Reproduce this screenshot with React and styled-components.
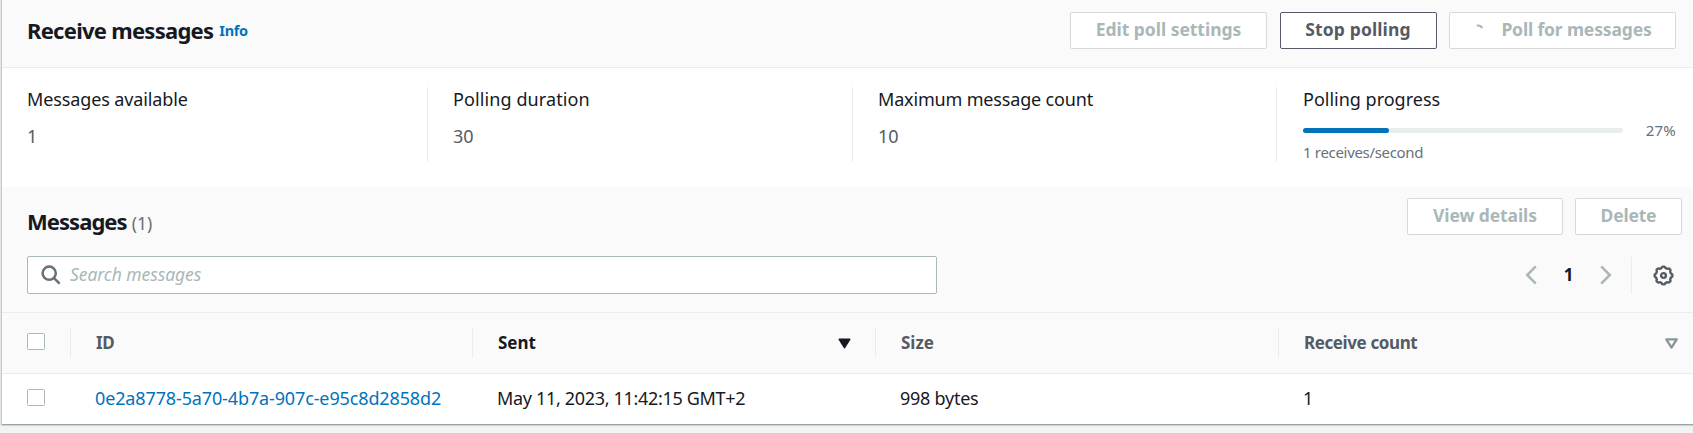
import React from 'react';
import styled, { createGlobalStyle } from 'styled-components';

const GlobalStyle = createGlobalStyle`
  * { box-sizing: border-box; }
  html, body { margin: 0; background: #f2f3f3; overflow: hidden; }
  body { font-family: 'Noto Sans', 'Open Sans', sans-serif; font-size: 18px; line-height: 28px; color: #16191f; }
`;

const Page = styled.div`
  height: 433px;
  padding-left: 2px;
  overflow: hidden;
`;

const Panel = styled.main`
  height: 424px;
  background: #fff;
  box-shadow: 0 1px 0 0 #98a3a4, 0 2px 1px 0 #d0d6d6, 0 0 0 1px #c0c9c9, 0 0 0 2px #e2e6e6;
`;

const Text = styled.span`
  white-space: nowrap;
  letter-spacing: ${(p) => p.$track || 0}px;
`;

const PollHeader = styled.header`
  display: flex;
  justify-content: space-between;
  height: 68px;
  padding: 12px 17px 0 25px;
  background: #fafafa;
  border-bottom: 1px solid #eaeded;
`;

const Title = styled.h2`
  display: flex;
  align-items: baseline;
  margin: 0;
  padding-top: ${(p) => p.$top}px;
  font-size: 22px;
  line-height: 30px;
  font-weight: 700;
`;

const InfoLink = styled.a`
  margin-left: 6px;
  font-size: 14.5px;
  font-weight: 700;
  color: #0073bb;
  position: relative;
  top: -3px;
`;

const Counter = styled.span`
  margin-left: 5px;
  font-size: 17.5px;
  font-weight: 400;
  color: #687078;
`;

const Actions = styled.div`
  display: flex;
  gap: ${(p) => p.$gap || 12}px;
`;

const Button = styled.button`
  display: flex;
  align-items: center;
  justify-content: center;
  width: ${(p) => p.$width}px;
  height: 37px;
  padding: 0 0 4px;
  border: 1px solid ${(p) => (p.disabled ? '#d5dbdb' : '#545b64')};
  border-radius: 2px;
  background: #fff;
  color: ${(p) => (p.disabled ? '#aab7b8' : '#545b64')};
  font: 700 17.5px/28px 'Noto Sans', sans-serif;
`;

const Spinner = styled.svg`
  width: 20px;
  height: 20px;
  margin-right: 8px;
`;

const Stats = styled.section`
  display: grid;
  grid-template-columns: 425px 425px 424px 1fr;
  height: 119px;
  padding-top: 19px;
`;

const Stat = styled.div`
  height: 75px;
  padding: 0 17px 0 ${(p) => (p.$last ? 26 : 25)}px;
  border-left: ${(p) => (p.$first ? 'none' : '1px solid #eaeded')};
`;

const StatLabel = styled.div`
  height: 27px;
  line-height: 24px;
`;

const StatValue = styled.div`
  padding-top: 8px;
  color: #545b64;
`;

const ProgressRow = styled.div`
  display: flex;
  align-items: center;
  justify-content: space-between;
  height: 20px;
  margin-top: 6px;
  font-size: 15px;
  color: #687078;
`;

const Track = styled.div`
  width: 320px;
  height: 5px;
  border-radius: 3px;
  background: #eaeded;
  margin-top: 1px;
`;

const Fill = styled.div`
  height: 5px;
  border-radius: 3px;
  background: #0073bb;
`;

const ProgressNote = styled.div`
  line-height: 22px;
  padding-top: 1px;
  font-size: 15px;
  color: #687078;
`;

const TableTools = styled.section`
  height: 126px;
  background: #fafafa;
  border-bottom: 1px solid #eaeded;
  padding: 11px 11px 0 25px;
`;

const ToolsRow = styled.div`
  display: flex;
  justify-content: space-between;
  height: 37px;
`;

const FilterRow = styled(ToolsRow)`
  margin-top: 21px;
  height: 38px;
`;

const Search = styled.label`
  display: flex;
  align-items: center;
  width: 910px;
  height: 38px;
  padding-left: 13px;
  border: 1px solid #aab7b8;
  border-radius: 2px;
  background: #fff;
`;

const SearchInput = styled.input`
  flex: 1;
  margin-left: 9px;
  padding: 0 0 2px;
  border: 0;
  outline: 0;
  background: transparent;
  font: italic 400 17.5px/28px 'Noto Sans', sans-serif;
  letter-spacing: -0.07px;
  &::placeholder { color: #aab7b8; opacity: 1; }
`;

const Pagination = styled.nav`
  display: flex;
  align-items: center;
  height: 38px;
`;

const PageNumber = styled.span`
  width: 63px;
  padding-bottom: 1px;
  text-align: center;
  font-weight: 700;
  font-size: 17px;
`;

const Preferences = styled.div`
  display: flex;
  align-items: center;
  height: 37px;
  margin-left: 19px;
  padding: 0 8px 0 21px;
  border-left: 1px solid #eaeded;
`;

const Row = styled.div`
  display: grid;
  grid-template-columns: 68px 402px 403px 403px 1fr;
  align-items: center;
  height: ${(p) => (p.$head ? 61 : 50)}px;
  background: ${(p) => (p.$head ? '#fafafa' : '#fff')};
  border-bottom: ${(p) => (p.$head ? '1px solid #eaeded' : 'none')};
`;

const HeadCell = styled.div`
  display: flex;
  align-items: center;
  justify-content: space-between;
  height: 30px;
  padding: 0 ${(p) => p.$end || 15}px 0 25px;
  border-left: 1px solid #eaeded;
  font-size: 17px;
  font-weight: 700;
  color: ${(p) => (p.$sorted ? '#16191f' : '#545b64')};
`;

const Cell = styled.div`
  padding: 0 0 2px 25px;
`;

const IdLink = styled.a`
  color: #0073bb;
`;

const Checkbox = styled.span`
  display: block;
  width: 18px;
  height: 17px;
  margin: 0 0 ${(p) => p.$lift}px 25px;
  border: 1px solid #aab7b8;
  border-radius: 1.5px;
  background: #fff;
`;

const SearchIcon = () => (
  <svg width="20" height="20" viewBox="0 0 20 20" fill="none" stroke="#687078" strokeWidth="2.5">
    <circle cx="8.2" cy="8.2" r="6.6" />
    <path d="M12.8 12.8L18.6 18.6" />
  </svg>
);

const Chevron = ({ next }) => (
  <svg width="12" height="20" viewBox="0 0 12 20" fill="none" stroke="#aab7b8" strokeWidth="2.5">
    <path d={next ? 'M1.2 1.4L9.8 10L1.2 18.6' : 'M10.8 1.4L2.2 10L10.8 18.6'} />
  </svg>
);

const gearPath = Array.from({ length: 96 }, (_, i) => {
  const a = (i / 96) * Math.PI * 2;
  const r = 8.25 + 0.65 * Math.tanh(2.2 * Math.cos(8 * a));
  return `${i ? 'L' : 'M'}${(10.5 + r * Math.cos(a)).toFixed(2)} ${(10.5 + r * Math.sin(a)).toFixed(2)}`;
}).join('') + 'Z';

const GearIcon = () => (
  <svg width="21" height="21" viewBox="0 0 21 21" fill="none" stroke="#545b64" strokeWidth="2.4" strokeLinejoin="round">
    <path d={gearPath} />
    <circle cx="10.5" cy="10.5" r="2.4" />
  </svg>
);

const SortIcon = ({ active }) => (
  <svg width="13" height="11" viewBox="0 0 13 11" strokeLinejoin="round" strokeWidth={active ? 1.6 : 2.3}
    fill={active ? '#16191f' : 'none'} stroke={active ? '#16191f' : '#879596'}>
    <path d="M1.3 1.4H11.7L6.5 9.6Z" />
  </svg>
);

export default function App() {
  return (
    <Page>
      <GlobalStyle />
      <Panel>
        <PollHeader>
          <Title $top={3}>
            <Text $track={-0.73}>Receive messages</Text>
            <InfoLink><Text $track={-0.3}>Info</Text></InfoLink>
          </Title>
          <Actions $gap={12.5}>
            <Button disabled $width={197}><Text $track={-0.03}>Edit poll settings</Text></Button>
            <Button $width={157}><Text $track={0.12}>Stop polling</Text></Button>
            <Button disabled $width={227}>
              <Spinner viewBox="0 0 20 20" fill="none" stroke="#aab7b8" strokeWidth="2.2">
                <path d="M3.8 6.6Q7.6 6 9.2 9" />
              </Spinner>
              <Text $track={-0.15}>Poll for messages</Text>
            </Button>
          </Actions>
        </PollHeader>
        <Stats>
          <Stat $first>
            <StatLabel><Text $track={-0.12}>Messages available</Text></StatLabel>
            <StatValue>1</StatValue>
          </Stat>
          <Stat>
            <StatLabel><Text $track={0.1}>Polling duration</Text></StatLabel>
            <StatValue>30</StatValue>
          </Stat>
          <Stat>
            <StatLabel><Text $track={-0.17}>Maximum message count</Text></StatLabel>
            <StatValue>10</StatValue>
          </Stat>
          <Stat $last>
            <StatLabel><Text>Polling progress</Text></StatLabel>
            <ProgressRow>
              <Track><Fill style={{ width: '27%' }} /></Track>
              <Text $track={0.2}>27%</Text>
            </ProgressRow>
            <ProgressNote><Text $track={-0.32}>1 receives/second</Text></ProgressNote>
          </Stat>
        </Stats>
        <TableTools>
          <ToolsRow>
            <Title $top={8}>
              <Text $track={-0.95}>Messages</Text>
              <Counter>(1)</Counter>
            </Title>
            <Actions>
              <Button disabled $width={156}><Text $track={-0.1}>View details</Text></Button>
              <Button disabled $width={107}><Text $track={-0.2}>Delete</Text></Button>
            </Actions>
          </ToolsRow>
          <FilterRow>
            <Search>
              <SearchIcon />
              <SearchInput placeholder="Search messages" />
            </Search>
            <Pagination>
              <Chevron />
              <PageNumber>1</PageNumber>
              <Chevron next />
              <Preferences><GearIcon /></Preferences>
            </Pagination>
          </FilterRow>
        </TableTools>
        <Row $head>
          <Checkbox $lift={3} />
          <HeadCell><Text $track={-0.4}>ID</Text></HeadCell>
          <HeadCell $sorted $end={24}><Text>Sent</Text><SortIcon active /></HeadCell>
          <HeadCell><Text>Size</Text></HeadCell>
          <HeadCell><Text $track={-0.4}>Receive count</Text><SortIcon /></HeadCell>
        </Row>
        <Row>
          <Checkbox $lift={3} />
          <Cell><IdLink><Text $track={-0.13}>0e2a8778-5a70-4b7a-907c-e95c8d2858d2</Text></IdLink></Cell>
          <Cell><Text $track={-0.32}>May 11, 2023, 11:42:15 GMT+2</Text></Cell>
          <Cell><Text $track={-0.25}>998 bytes</Text></Cell>
          <Cell><Text>1</Text></Cell>
        </Row>
      </Panel>
    </Page>
  );
}
